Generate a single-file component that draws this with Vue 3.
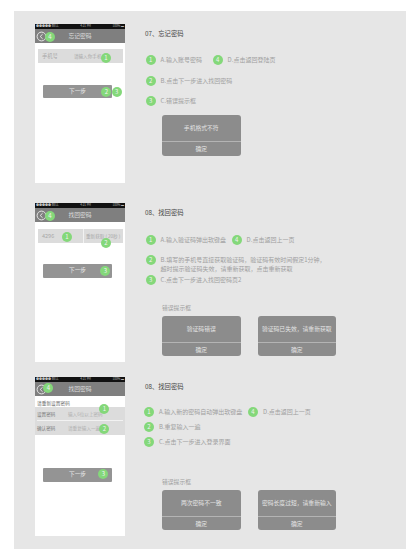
<script setup>
const screens = [
  {
    id: 'a', title: '忘记密码',
    notes: {
      heading: '07、忘记密码',
      rows: [
        [{ n: 1, t: 'A.输入账号密码', w: 52 }, { n: 4, t: 'D.点击返回登陆页' }],
        [{ n: 2, t: 'B.点击下一步进入找回密码' }],
        [{ n: 3, t: 'C.错误提示框' }],
      ],
      label: '',
      dialogs: ['手机格式不符'],
    },
  },
  {
    id: 'b', title: '找回密码',
    notes: {
      heading: '08、找回密码',
      rows: [
        [{ n: 1, t: 'A.输入验证码弹出软键盘', w: 71 }, { n: 4, t: 'D.点击返回上一页' }],
        [{ n: 2, t: 'B.填写的手机号直接获取验证码，验证码有效时间假定1分钟，\n超时提示验证码失效，请重新获取，点击重新获取' }],
        [{ n: 3, t: 'C.点击下一步进入找回密码页2' }],
      ],
      label: '错误提示框',
      dialogs: ['验证码错误', '验证码已失效，请重新获取'],
    },
  },
  {
    id: 'c', title: '找回密码',
    notes: {
      heading: '08、找回密码',
      rows: [
        [{ n: 1, t: 'A.输入新的密码自动弹出软键盘', w: 89 }, { n: 4, t: 'D.点击返回上一页' }],
        [{ n: 2, t: 'B.重复输入一遍' }],
        [{ n: 3, t: 'C.点击下一步进入登录界面' }],
      ],
      label: '错误提示框',
      dialogs: ['两次密码不一致', '密码长度过短，请重新输入'],
    },
  },
]
</script>

<template>
  <div class="page">
    <section v-for="s in screens" :key="s.id" class="row" :class="'row-' + s.id">
      <div class="phone">
        <div class="status">
          <span>●●●●● BELL</span><span>4:21 PM</span><span>100% ▬</span>
        </div>
        <div class="nav">
          <svg class="back" width="11" height="11" viewBox="0 0 11 11">
            <circle cx="5.5" cy="5.5" r="4.4" fill="none" stroke="#eee" stroke-width="0.9" />
            <path d="M6.6 3.2 4.2 5.5l2.4 2.3" fill="none" stroke="#eee" stroke-width="0.9" />
          </svg>
          <span>{{ s.title }}</span>
          <i class="dot dot-back">4</i>
        </div>

        <div v-if="s.id === 'a'" class="field">
          <span class="field-name">手机号</span>
          <span class="hint">请输入你手机</span>
          <i class="dot dot-input">1</i>
        </div>

        <div v-if="s.id === 'b'" class="field">
          <span class="code">4296</span>
          <span class="resend">重新获取 ( 20秒 )</span>
          <i class="dot dot-code">1</i>
          <i class="dot dot-resend">2</i>
        </div>

        <template v-if="s.id === 'c'">
          <p class="reset-tip">请重新设置密码</p>
          <div class="group">
            <div class="group-line"><b>设置密码</b><span>输入6位以上密码</span></div>
            <div class="group-line"><b>确认密码</b><span>请重复输入一遍</span></div>
            <i class="dot dot-pw1">1</i>
            <i class="dot dot-pw2">2</i>
          </div>
        </template>

        <div class="next">
          下一步
          <template v-if="s.id === 'a'">
            <i class="dot dot-next">2</i>
            <i class="dot dot-next-out">3</i>
          </template>
          <i v-else class="dot dot-next">3</i>
        </div>
      </div>

      <div class="notes">
        <h2>{{ s.notes.heading }}</h2>
        <div class="steps">
          <div v-for="(r, i) in s.notes.rows" :key="i" class="step-row">
            <div v-for="item in r" :key="item.n" class="step">
              <i class="num">{{ item.n }}</i>
              <span :style="item.w ? { width: item.w + 'px' } : null">{{ item.t }}</span>
            </div>
          </div>
        </div>
        <p v-if="s.notes.label" class="label">{{ s.notes.label }}</p>
        <div class="dialogs">
          <div v-for="d in s.notes.dialogs" :key="d" class="dialog">
            <div class="msg">{{ d }}</div>
            <div class="ok">确定</div>
          </div>
        </div>
      </div>
    </section>
  </div>
</template>

<style>
html, body { margin: 0; background: #fff; }
</style>

<style scoped>
.page {
  width: 392px;
  height: 538px;
  margin: 11px 0 0 14px;
  padding-left: 21px;
  box-sizing: border-box;
  background: #e6e6e6;
  font-family: "Noto Sans CJK SC", "Liberation Sans", sans-serif;
  overflow: hidden;
  position: relative;
}
.row {
  display: flex;
  height: 159px;
  padding-top: 13px;
}
.row-b { padding-top: 20px; }
.row-c { padding-top: 15px; }
.phone {
  position: relative;
  width: 90px;
  height: 159px;
  flex: none;
  background: #fff;
}
.status {
  height: 5px;
  background: #111;
  color: #bbb;
  font-size: 3px;
  line-height: 5px;
  display: flex;
  justify-content: space-between;
  padding: 0 1px;
}
.nav {
  position: relative;
  height: 14px;
  background: #7f7f7f;
  color: #ddd;
  font-size: 5.8px;
  line-height: 14px;
  text-align: center;
}
.back {
  position: absolute;
  left: 1px;
  top: 1.5px;
}
.row-c .back { left: 0.5px; }
.dot {
  position: absolute;
  width: 10px;
  height: 10px;
  border-radius: 50%;
  background: #84d87a;
  color: #f2f2f2;
  font-size: 6px;
  font-style: normal;
  line-height: 10px;
  text-align: center;
}
.dot-back { left: 10px; top: 3px; }
.row-c .dot-back { left: 8.3px; top: 1.3px; }
.field {
  position: relative;
  display: flex;
  align-items: center;
  height: 14px;
  margin: 6px 2px 0 3px;
  background: #dcdcdc;
  color: #a8a8a8;
}
.row-b .field { margin-top: 6.5px; }
.field-name { margin-left: 4px; font-size: 5.3px; }
.hint { margin-left: 16px; font-size: 4.6px; }
.code { margin-left: 4px; font-size: 5.5px; }
.resend {
  margin-left: auto;
  width: 40px;
  box-sizing: border-box;
  padding-left: 2px;
  border-left: 1px solid #f2f2f2;
  font-size: 4.6px;
  line-height: 14px;
  white-space: nowrap;
}
.dot-input { left: 63px; top: 3.7px; }
.dot-code { left: 24px; top: 3px; }
.dot-resend { left: 63px; top: 9.8px; }
.reset-tip {
  margin: 3px 0 0 2px;
  font-size: 4.7px;
  line-height: 8px;
  color: #666;
}
.group {
  position: relative;
  height: 28px;
  background: #dcdcdc;
}
.group-line {
  display: flex;
  align-items: center;
  height: 14px;
  margin: 0 2px;
  box-sizing: border-box;
  font-size: 4.6px;
  color: #b0b0b0;
}
.group-line:first-child { border-bottom: 1px solid #f2f2f2; }
.group-line b { width: 31px; font-weight: 400; color: #777; }
.dot-pw1 { left: 64.3px; top: -3px; }
.dot-pw2 { left: 64.3px; top: 17.3px; }
.next {
  position: absolute;
  left: 8px;
  top: 60.5px;
  width: 69px;
  height: 13.5px;
  border-radius: 1px;
  background: #949494;
  color: #e8e8e8;
  font-size: 5.6px;
  line-height: 13.5px;
  text-align: center;
}
.row-b .next { top: 61px; }
.row-c .next { top: 91px; }
.dot-next { right: 0.7px; top: 2.5px; }
.dot-next-out { right: -9.7px; top: 2.5px; }
.row-b .dot-next { right: 1.7px; top: 2.3px; }
.row-c .dot-next { right: 3.7px; top: 1px; }
.notes {
  flex: 1;
  padding-left: 20px;
  color: #a0a0a0;
}
h2 {
  margin: 0;
  padding-top: 5px;
  font-size: 6.3px;
  line-height: 9px;
  font-weight: 400;
  color: #444;
}
.row-b h2, .row-c h2 { padding-top: 4.5px; }
.steps { display: flex; flex-direction: column; margin: 17px 0 0 0.6px; gap: 10.5px; }
.row-b .steps { margin-top: 18.5px; gap: 10px; }
.row-c .steps { margin: 16.5px 0 0 -1px; gap: 5px; }
.step-row { display: flex; height: 10px; }
.step { display: flex; align-items: flex-start; }
.step span {
  margin-left: 5px;
  padding-top: 1px;
  font-size: 6px;
  line-height: 8.5px;
  white-space: pre;
}
.num {
  width: 10px;
  height: 10px;
  flex: none;
  border-radius: 50%;
  background: #84d87a;
  color: #f2f2f2;
  font-size: 6px;
  font-style: normal;
  line-height: 10px;
  text-align: center;
}
.label { margin: 17.5px 0 4.5px 17px; font-size: 5.8px; line-height: 9px; }
.row-c .label { margin-top: 29.5px; }
.dialogs { display: flex; gap: 17px; margin-left: 17px; }
.row-a .dialogs { margin-top: 9px; }
.dialog {
  width: 78.5px;
  height: 40px;
  border-radius: 3px;
  background: #8c8c8c;
  color: #e4e4e4;
  font-size: 5.8px;
  text-align: center;
  overflow: hidden;
}
.row-a .dialog { height: 41px; }
.msg {
  height: 26px;
  line-height: 26px;
  border-bottom: 1px solid #b4b4b4;
  white-space: nowrap;
}
.ok { line-height: 13px; }
</style>
